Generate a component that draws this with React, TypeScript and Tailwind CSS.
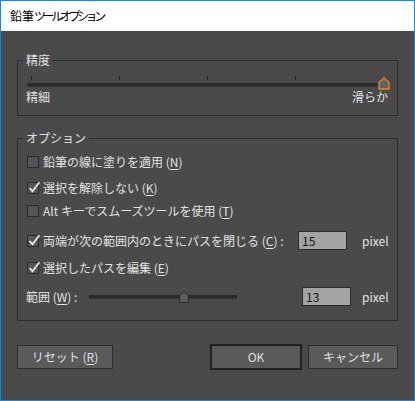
import React from "react";

function Box({ checked }: { checked?: boolean }) {
  return (
    <span className="relative block w-[12px] h-[12px] shrink-0 border border-[#2b2b2b] bg-[#555555]">
      {checked && (
        <svg className="absolute left-[0px] top-[-3px]" width="13" height="14" viewBox="0 0 13 14">
          <path d="M1.6 8 L4.5 11.4 L11.4 2.2" stroke="#e8e8e8" strokeWidth="1.8" fill="none" />
        </svg>
      )}
    </span>
  );
}

function U({ c }: { c: string }) {
  return <span className="underline underline-offset-2">{c}</span>;
}

export default function App() {
  return (
    <div className="w-[415px] h-[401px] border border-[#1c87d9] flex flex-col font-['Noto_Sans_CJK_JP',sans-serif] text-[12px] leading-[16px] overflow-hidden">
      <div className="h-[30px] shrink-0 bg-white pl-[9px] flex items-center text-black">
        <span>鉛筆</span>
        <span className="tracking-[-3.4px]">ツールオプション</span>
      </div>
      <div className="flex-1 bg-[#4a4a4a] px-[16px] pt-[21px] text-[#e2e2e2]">
        <fieldset className="border border-[#2c2c2c] pl-[9px] pr-[10px] pb-[10px]">
          <legend className="ml-[-4px] px-[3px]">精度</legend>
          <div className="relative mt-[8px] h-[13px]">
            <div className="flex pl-[4px] gap-[87px] h-[4px]">
              <span className="w-px h-[4px] bg-[#262626]" />
              <span className="w-px h-[4px] bg-[#262626]" />
              <span className="w-px h-[4px] bg-[#262626]" />
              <span className="w-px h-[4px] bg-[#262626]" />
            </div>
            <div className="mt-[3px] h-[4px] bg-[#2a2a2a] border-b border-[#383838]" />
            <svg className="absolute left-[351px] top-[1px]" width="12" height="13" viewBox="0 0 12 13">
              <path d="M1 12 L1 5.5 L6 0.8 L11 5.5 L11 12 Z" fill="#626262" stroke="#ee8a1e" strokeWidth="1.3" />
            </svg>
          </div>
          <div className="flex justify-between ml-[-1px] mr-[-1px]">
            <span>精細</span>
            <span>滑らか</span>
          </div>
        </fieldset>

        <fieldset className="mt-[14px] border border-[#2c2c2c] pl-[9px] pr-0 pb-[14px]">
          <legend className="ml-[-4px] px-[3px]">オプション</legend>
          <div className="mt-[8px] h-[16px] flex items-center gap-[4px]">
            <Box />
            <span>鉛筆の線に塗りを適用 (<U c="N" />)</span>
          </div>
          <div className="mt-[10px] h-[16px] flex items-center gap-[4px]">
            <Box checked />
            <span>選択を解除しない (<U c="K" />)</span>
          </div>
          <div className="mt-[7px] h-[16px] flex items-center gap-[4px]">
            <Box />
            <span>Alt キーでスムーズツールを使用 (<U c="T" />)</span>
          </div>
          <div className="mt-[12px] h-[19px] flex items-center gap-[4px]">
            <Box checked />
            <span>両端が次の範囲内のときにパスを閉じる (<U c="C" />) :</span>
            <div className="ml-auto w-[49px] h-[19px] bg-[#a3a3a3] border border-[#2a2a2a] text-[#111] pl-[3px] flex items-center">15</div>
            <span className="ml-[11px] w-[35px]">pixel</span>
          </div>
          <div className="mt-[10px] h-[16px] flex items-center gap-[4px]">
            <Box checked />
            <span>選択したパスを編集 (<U c="E" />)</span>
          </div>
          <div className="mt-[11px] h-[19px] flex items-center ml-[-1px]">
            <span className="w-[63px] shrink-0">範囲 (<U c="W" />) :</span>
            <div className="relative w-[148px] h-[12px] flex items-center">
              <div className="w-full h-[4px] bg-[#2a2a2a] border-b border-[#383838]" />
              <svg className="absolute left-[90px] top-[0px]" width="10" height="12" viewBox="0 0 10 12">
                <path d="M0.6 11.4 L0.6 4.5 L5 0.6 L9.4 4.5 L9.4 11.4 Z" fill="#5c5c5c" stroke="#2a2a2a" strokeWidth="1" />
              </svg>
            </div>
            <div className="ml-auto w-[49px] h-[19px] bg-[#a3a3a3] border border-[#2a2a2a] text-[#111] pl-[3px] flex items-center">13</div>
            <span className="ml-[11px] w-[35px]">pixel</span>
          </div>
        </fieldset>

        <div className="mt-[23px] h-[26px] flex items-center">
          <button className="w-[96px] h-[24px] bg-[#5a5a5a] border border-[#2e2e2e] text-[#e0e0e0]">
            リセット (<U c="R" />)
          </button>
          <button className="ml-auto w-[92px] h-[26px] bg-[#5a5a5a] border-2 border-[#222222] text-[#e0e0e0]">
            OK
          </button>
          <button className="ml-[6px] w-[90px] h-[24px] bg-[#5a5a5a] border border-[#2e2e2e] text-[#e0e0e0]">
            キャンセル
          </button>
        </div>
      </div>
    </div>
  );
}
